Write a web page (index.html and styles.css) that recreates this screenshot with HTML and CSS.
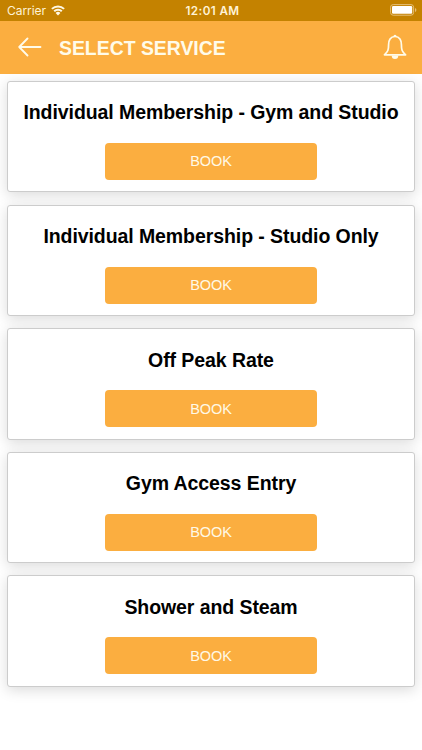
FILE: index.html
```html
<!DOCTYPE html>
<html lang="en">
<head>
<meta charset="utf-8">
<title>Select Service</title>
<link rel="stylesheet" href="styles.css">
</head>
<body>
<div class="status">
  <div class="carrier"><span>Carrier</span>
    <svg class="wifi" width="14" height="11" viewBox="0 0 14 11"><path d="M7 10.400 4.600 8a3.400 3.400 0 0 1 4.800 0z" fill="#fff8e3"/><path d="M3.200 6.300a5.400 5.400 0 0 1 7.600 0M.9 3.900a8.700 8.700 0 0 1 12.200 0" fill="none" stroke="#fff8e3" stroke-width="2"/></svg>
  </div>
  <div class="time">12:01 AM</div>
  <svg class="battery" width="27" height="12" viewBox="0 0 27 12"><rect x=".6" y=".6" width="23" height="10.600" rx="2.600" fill="none" stroke="#e5bf77"/><rect x="2" y="2" width="20.200" height="7.800" rx="1.200" fill="#fff"/><path d="M25 4v4q1.400-.6 1.400-2T25 4" fill="#e5bf77"/></svg>
</div>
<header class="header">
  <svg class="back" width="24" height="20" viewBox="0 0 24 20"><path d="M9.500 1.500 1.200 10l8.300 8.500M1.200 10H22.500" fill="none" stroke="#fffbe9" stroke-width="1.800" stroke-linecap="round" stroke-linejoin="round"/></svg>
  <h1>SELECT SERVICE</h1>
  <svg class="bell" width="24" height="26" viewBox="0 0 24 26"><path d="M12 2.500C7.300 2.500 5.600 6.300 5.600 10.500c0 5.500-.6 7.200-4.200 10.300h21.200c-3.600-3.100-4.200-4.800-4.200-10.300 0-4.200-1.700-8-6.400-8z" fill="none" stroke="#fffbe9" stroke-width="1.700" stroke-linejoin="round"/><path d="M10.400 2.700a1.600 2 0 0 1 3.200 0zM8.700 21.500h6.600a3.300 3.500 0 0 1-6.600 0z" fill="#fffbe9"/></svg>
</header>
<main class="services">
  <section class="card"><h2>Individual Membership - Gym and Studio</h2><button>BOOK</button></section>
  <section class="card"><h2>Individual Membership - Studio Only</h2><button>BOOK</button></section>
  <section class="card"><h2>Off Peak Rate</h2><button>BOOK</button></section>
  <section class="card"><h2>Gym Access Entry</h2><button>BOOK</button></section>
  <section class="card"><h2>Shower and Steam</h2><button>BOOK</button></section>
</main>
</body>
</html>
```
FILE: styles.css
```css
* { box-sizing: border-box; }
body {
  margin: 0;
  height: 750px;
  overflow: hidden;
  background: #fff;
  font-family: "Liberation Sans", Arial, sans-serif;
}
.status {
  height: 21px;
  display: grid;
  grid-template-columns: 1fr auto 1fr;
  align-items: center;
  padding: 0 5px 0 7px;
  background: #c48200;
  color: #fff3d5;
  font-family: Inter, sans-serif;
  font-size: 12px;
}
.carrier { display: flex; align-items: center; gap: 5px; letter-spacing: -.05px; }
.time { padding-left: 1px; font-weight: 600; font-size: 11.700px; letter-spacing: .4px; }
.battery { justify-self: end; margin-bottom: 1px; }
.header {
  height: 53.400px;
  display: flex;
  align-items: center;
  padding: 0 15px 2px 18px;
  background: #fbae40;
  color: #fffbe9;
}
h1 { margin: 0 auto 0 17px; padding-top: 2px; font-size: 19.400px; line-height: 24px; font-weight: 700; }
.services {
  display: grid;
  gap: 12.200px;
  padding: 6.600px 6.700px 0;
}
.card {
  height: 111.400px;
  display: flex;
  flex-direction: column;
  align-items: center;
  padding-top: 18.400px;
  border: 1px solid #ccc;
  border-radius: 3px;
  background: #fff;
  box-shadow: 0 3px 14px rgba(0, 0, 0, .15);
}
h2 {
  margin: 0 0 18.600px;
  font-size: 19.500px;
  letter-spacing: -.08px;
  line-height: 24px;
  font-weight: 700;
  color: #000;
  white-space: nowrap;
}
button {
  width: 212px;
  height: 37px;
  padding: 0;
  border: 0;
  border-radius: 4px;
  background: #fbae40;
  color: #fff9e6;
  font: 14.500px "Liberation Sans", Arial, sans-serif;
  letter-spacing: -.1px;
}
```
